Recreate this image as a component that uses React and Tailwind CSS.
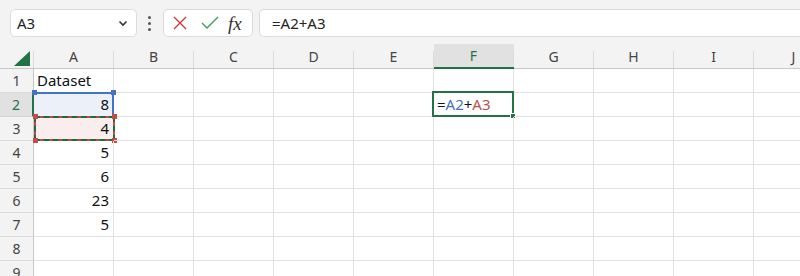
import React from "react";

const COLS = ["A", "B", "C", "D", "E", "F", "G", "H", "I", "J"];
const DATA = { 1: "Dataset", 2: "8", 3: "4", 4: "5", 5: "6", 6: "23", 7: "5" };

function Corner({ className }) {
  return <div className={"absolute w-[5px] h-[5px] " + className} />;
}

function CellContent({ r, c }) {
  if (c === 0) {
    if (r === 1)
      return <span className="pl-[3px] text-[15px] text-[#111]">Dataset</span>;
    if (DATA[r] !== undefined)
      return (
        <span className="ml-auto pr-[4px] text-[15px] text-[#111]">{DATA[r]}</span>
      );
  }
  if (c === 5 && r === 2)
    return (
      <span className="pl-[3px] text-[15px] text-[#111]">
        =<span className="text-[#4472c4]">A2</span>+<span className="text-[#c0504d]">A3</span>
      </span>
    );
  return null;
}

function Overlay({ r, c }) {
  if (c === 0 && r === 2)
    return (
      <div className="absolute -left-px -top-px w-[81px] h-[25px] bg-[#4472c4]/10 border-t-2 border-r-2 border-[#4472c4]">
        <Corner className="bg-[#4472c4] -right-[4px] -top-[4px]" />
        <Corner className="bg-[#4472c4] -left-[1px] -top-[4px] w-[4px] h-[4px]" />
      </div>
    );
  if (c === 0 && r === 3)
    return (
      <div className="absolute left-0 -top-px w-[81px] h-[25px] bg-[#c0504d]/10 border-2 border-[#c84a48]">
        <div className="absolute -inset-[2px] border-2 border-dashed border-[#1f6b3c]" />
        <Corner className="bg-[#c84a48] -right-[4px] -top-[4px]" />
        <Corner className="bg-[#c84a48] -right-[4px] -bottom-[4px]" />
        <Corner className="bg-[#c84a48] -left-[3px] -bottom-[4px]" />
        <Corner className="bg-[#c84a48] -left-[3px] -top-[4px]" />
      </div>
    );
  if (c === 5 && r === 2)
    return (
      <div className="absolute -left-[2px] -top-[2px] w-[82px] h-[26px] border-2 border-[#217346]">
        <div className="absolute w-[6px] h-[6px] bg-[#217346] -right-[4px] -bottom-[4px] border border-white" />
      </div>
    );
  return null;
}

export default function App() {
  const rows = [1, 2, 3, 4, 5, 6, 7, 8, 9];
  return (
    <div
      className="w-[800px] h-[276px] overflow-hidden bg-white"
      style={{ fontFamily: '"Noto Sans", "Liberation Sans", sans-serif' }}
    >
      {/* Formula bar */}
      <div className="flex items-start h-[44px] bg-[#f3f3f3] pt-[9px] pl-[10px]">
        <div className="flex items-center w-[127px] h-[28px] bg-white border border-[#dcdcdc] rounded-[5px] pl-[6px] pr-[8px]">
          <span className="text-[15px] text-[#222]">A3</span>
          <svg className="ml-auto" width="10" height="10" viewBox="0 0 10 10">
            <path d="M1.5 3.5 L5 7 L8.5 3.5" fill="none" stroke="#333" strokeWidth="1.6" />
          </svg>
        </div>
        <div className="flex flex-col items-center justify-center gap-[3px] w-[25px] h-[28px]">
          <div className="w-[3px] h-[3px] bg-[#555] rounded-full" />
          <div className="w-[3px] h-[3px] bg-[#555] rounded-full" />
          <div className="w-[3px] h-[3px] bg-[#555] rounded-full" />
        </div>
        <div className="flex items-center w-[90px] h-[28px] bg-white border border-[#dcdcdc] rounded-[5px] ml-[1px] pl-[8px]">
          <svg width="16" height="16" viewBox="0 0 16 16">
            <path d="M2 2 L14 14 M14 2 L2 14" stroke="#d13438" strokeWidth="1.3" fill="none" />
          </svg>
          <svg className="ml-[13px]" width="18" height="14" viewBox="0 0 18 14">
            <path d="M1 7 L6 12 L17 1" stroke="#3c9a5f" strokeWidth="1.3" fill="none" />
          </svg>
          <span
            className="ml-[9px] text-[19px] italic text-[#333] leading-none"
            style={{ fontFamily: '"Liberation Serif", "DejaVu Serif", serif' }}
          >
            fx
          </span>
        </div>
        <div className="flex items-center flex-1 h-[28px] bg-white border border-[#dcdcdc] rounded-l-[5px] border-r-0 ml-[6px] pl-[12px]">
          <span className="text-[15px] text-[#222]">=A2+A3</span>
        </div>
      </div>

      {/* Column headers */}
      <div className="flex h-[25px] bg-[#f3f3f3] border-b border-[#c8c8c8]">
        <div className="relative w-[34px] shrink-0 flex items-end justify-end">
          <svg className="mb-[2px] mr-[3px]" width="16" height="15" viewBox="0 0 16 15">
            <path d="M16 0 L16 15 L0 15 Z" fill="#217346" />
          </svg>
          <div className="w-px h-[17px] bg-[#dadada]" />
        </div>
        {COLS.map((c) => (
          <div
            key={c}
            className={
              "flex items-end w-[80px] shrink-0 " +
              (c === "F" ? "bg-[#e1e1e1] border-b-2 border-[#217346] -mb-px" : "")
            }
          >
            <span
              className={
                "flex-1 text-center text-[14px] leading-[22px] " +
                (c === "F" ? "text-[#217346]" : "text-[#444]")
              }
            >
              {c}
            </span>
            <div className="w-px h-[17px] bg-[#dadada]" />
          </div>
        ))}
      </div>

      {/* Rows */}
      {rows.map((r) => (
        <div key={r} className="flex h-[24px]">
          <div
            className={
              "flex items-center justify-center w-[34px] shrink-0 border-b text-[14px] " +
              (r === 2
                ? "bg-[#e1e1e1] border-b-[#d4d4d4] text-[#217346] border-r-2 border-r-[#217346]"
                : "bg-[#f3f3f3] border-b-[#dadada] text-[#444] border-r border-r-[#c8c8c8]")
            }
          >
            {r}
          </div>
          {COLS.map((c, ci) => (
            <div
              key={c}
              className="relative flex items-center w-[80px] shrink-0 border-r border-b border-[#e1e1e1]"
            >
              <Overlay r={r} c={ci} />
              <div className="relative flex w-full items-center">
                <CellContent r={r} c={ci} />
              </div>
            </div>
          ))}
        </div>
      ))}
    </div>
  );
}
